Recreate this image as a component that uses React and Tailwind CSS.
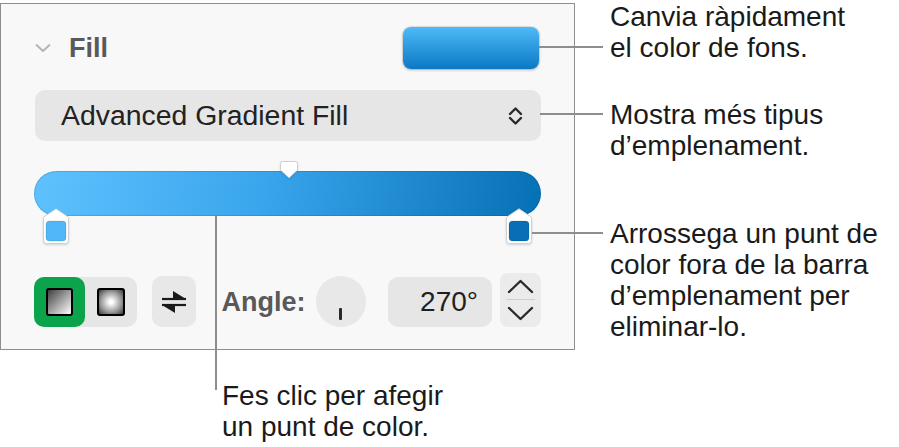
import React from "react";

function Stop({ color }) {
  return (
    <svg width="26" height="36" viewBox="0 0 26 36" className="drop-shadow-[0_1px_1px_rgba(0,0,0,0.15)]">
      <path
        d="M13 0.8 L24.6 8.6 Q25.5 9.2 25.5 10.5 L25.5 32.5 Q25.5 35.5 22.5 35.5 L3.5 35.5 Q0.5 35.5 0.5 32.5 L0.5 10.5 Q0.5 9.2 1.4 8.6 Z"
        fill="#ffffff"
        stroke="#cfcfcf"
        strokeWidth="1"
      />
      <rect x="3" y="13" width="20" height="20" rx="3.5" fill={color} stroke="rgba(0,0,0,0.12)" strokeWidth="1" />
    </svg>
  );
}

function TopHandle() {
  return (
    <svg width="18" height="18" viewBox="0 0 18 18" className="drop-shadow-[0_1px_1px_rgba(0,0,0,0.12)]">
      <path
        d="M2.5 0.5 H15.5 Q17.5 0.5 17.5 2.5 V9 L9 16.8 L0.5 9 V2.5 Q0.5 0.5 2.5 0.5 Z"
        fill="#ffffff"
        stroke="#cfcfcf"
        strokeWidth="1"
      />
    </svg>
  );
}

export default function App() {
  return (
    <div className="relative w-[899px] h-[447px] bg-white flex font-['Liberation_Sans',Arial,sans-serif] overflow-hidden">
      {/* left column */}
      <div className="w-[575px] flex flex-col shrink-0">
        <div className="mt-[3px] h-[347px] border border-[#8e8e8e] bg-[#f8f8f8] px-[33px] pt-[23px] flex flex-col">
          {/* header */}
          <div className="h-[42px] flex items-center">
            <svg width="16" height="10" viewBox="0 0 16 10" className="ml-[1px]">
              <polyline points="1.5,2 8,8 14.5,2" fill="none" stroke="#b3b3b3" strokeWidth="1.8" strokeLinecap="round" strokeLinejoin="round" />
            </svg>
            <span className="ml-[18px] text-[27px] font-bold text-[#595959] leading-none">Fill</span>
            <div className="ml-auto mr-[2px] w-[136px] h-[42px] rounded-[8px] bg-[linear-gradient(to_bottom,#4ebaf7,#0b78c5)] shadow-[0_0_0_1px_rgba(0,0,0,0.08),0_1px_3px_rgba(0,0,0,0.25)]" />
          </div>

          {/* dropdown */}
          <div className="mt-[21px] ml-[1px] w-[506px] h-[51px] rounded-[10px] bg-[#e6e6e6] flex items-center pl-[26px] pr-[18px]">
            <span className="text-[28.4px] text-[#222222] leading-none">Advanced Gradient Fill</span>
            <svg width="15" height="20" viewBox="0 0 15 20" className="ml-auto">
              <polyline points="2,8 7.5,2.5 13,8" fill="none" stroke="#2a2a2a" strokeWidth="2.4" strokeLinecap="round" strokeLinejoin="round" />
              <polyline points="2,12 7.5,17.5 13,12" fill="none" stroke="#2a2a2a" strokeWidth="2.4" strokeLinecap="round" strokeLinejoin="round" />
            </svg>
          </div>

          {/* gradient bar */}
          <div className="h-[132px]">
            <div className="relative mt-[30px] h-[45px] rounded-full bg-[linear-gradient(100deg,#5fc2fe,#39a5ec_45%,#0670b5)] shadow-[inset_0_0_0_1px_rgba(0,60,120,0.18)]">
              <div className="absolute left-[246px] top-[-10px]">
                <TopHandle />
              </div>
              <div className="absolute left-[9px] top-[37px]">
                <Stop color="#52b7f8" />
              </div>
              <div className="absolute right-[9px] top-[37px]">
                <Stop color="#0a6eb7" />
              </div>
            </div>
          </div>

          {/* bottom row */}
          <div className="h-[54px] flex items-end">
            <div className="w-[103px] h-[50px] rounded-[10px] bg-[#e6e6e6] flex">
              <div className="w-[51px] h-[50px] rounded-[10px] bg-[#0ba34b] flex items-center justify-center">
                <div className="w-[27px] h-[28px] rounded-[3px] border-2 border-black bg-[linear-gradient(135deg,#3f3f3f,#ffffff)]" />
              </div>
              <div className="w-[52px] h-[50px] flex items-center justify-center">
                <div className="w-[28px] h-[28px] rounded-[3px] border-2 border-black bg-[radial-gradient(circle,#ffffff_10%,#9a9a9a_60%,#3a3a3a_100%)]" />
              </div>
            </div>
            <div className="ml-[15px] w-[44px] h-[51px] rounded-[10px] bg-[#e8e8e8] flex items-center justify-center">
              <svg width="26" height="26" viewBox="0 0 26 26">
                <line x1="1" y1="10" x2="25" y2="10" stroke="#1a1a1a" strokeWidth="2.2" />
                <polygon points="12,2 25,10 12,10" fill="#1a1a1a" />
                <line x1="1" y1="16" x2="25" y2="16" stroke="#1a1a1a" strokeWidth="2.2" />
                <polygon points="1,16 14,16 14,24" fill="#1a1a1a" />
              </svg>
            </div>
            <div className="ml-[26px] h-[50px] flex items-center">
              <span className="text-[27px] font-bold text-[#595959] leading-none">Angle:</span>
            </div>
            <div className="ml-[10px] w-[51px] h-[51px] rounded-full bg-[#e8e8e8] flex items-end justify-center pb-[7px]">
              <div className="w-[3px] h-[12px] bg-[#2a2a2a] rounded-[1px]" />
            </div>
            <div className="ml-[22px] w-[105px] h-[50px] rounded-[10px] bg-[#e6e6e6] flex items-center justify-end pr-[14px]">
              <span className="text-[28px] text-[#1f1f1f] leading-none">270°</span>
            </div>
            <div className="ml-[8px] w-[41px] h-[54px] rounded-[8px] bg-[#ebebeb] flex flex-col items-center">
              <svg width="41" height="54" viewBox="0 0 41 54">
                <polyline points="9,19 20.5,8 32,19" fill="none" stroke="#2a2a2a" strokeWidth="2.4" strokeLinecap="round" strokeLinejoin="round" />
                <line x1="6" y1="26.5" x2="35" y2="26.5" stroke="#cfcfcf" strokeWidth="1" />
                <polyline points="9,35 20.5,46 32,35" fill="none" stroke="#2a2a2a" strokeWidth="2.4" strokeLinecap="round" strokeLinejoin="round" />
              </svg>
            </div>
          </div>
        </div>

        {/* bottom callout */}
        <div className="mt-[30px] pl-[222px] text-[28px] leading-[31px] text-[#1a1a1a]">
          <div>Fes clic per afegir</div>
          <div>un punt de color.</div>
        </div>
      </div>

      {/* right callouts */}
      <div className="pl-[35px] pt-[1px] text-[28px] leading-[31px] text-[#1a1a1a] whitespace-nowrap">
        <div>
          <div>Canvia ràpidament</div>
          <div>el color de fons.</div>
        </div>
        <div className="mt-[36px]">
          <div>Mostra més tipus</div>
          <div>d’emplenament.</div>
        </div>
        <div className="mt-[57px]">
          <div>Arrossega un punt de</div>
          <div>color fora de la barra</div>
          <div>d’emplenament per</div>
          <div>eliminar-lo.</div>
        </div>
      </div>

      {/* leader lines */}
      <div className="absolute left-[539px] top-[46px] w-[64px] h-[2px] bg-[#8e8e8e]" />
      <div className="absolute left-[540px] top-[113px] w-[63px] h-[2px] bg-[#8e8e8e]" />
      <div className="absolute left-[532px] top-[232px] w-[71px] h-[2px] bg-[#8e8e8e]" />
      <div className="absolute left-[215px] top-[216px] w-[2px] h-[174px] bg-[#8e8e8e]" />
    </div>
  );
}
